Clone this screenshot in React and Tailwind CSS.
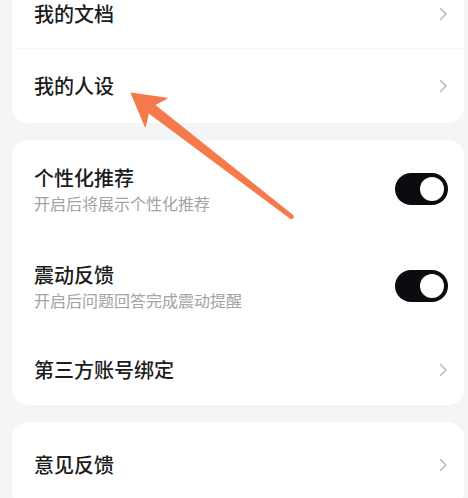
import React from "react";

const FONT = { fontFamily: '"Noto Sans CJK SC", "Noto Sans", sans-serif' };

function Chevron() {
  return (
    <svg width="9" height="14" viewBox="0 0 9 14" fill="none">
      <path d="M1.5 1.5 L7 7 L1.5 12.5" stroke="#b9b9b9" strokeWidth="1.5" strokeLinecap="round" strokeLinejoin="round" />
    </svg>
  );
}

function Toggle() {
  return (
    <div className="w-[53px] h-[32px] rounded-full bg-[#0b0b10] flex items-center justify-end pr-[4px]">
      <div className="w-[24px] h-[24px] rounded-full bg-white" />
    </div>
  );
}

function LinkRow({ title, h, border }) {
  return (
    <div className={`flex items-center justify-between pl-[22px] pr-[16px] ${h} ${border ? "border-b border-[#f7f7f7]" : ""}`}>
      <span className="text-[20px] font-medium text-[#1c1c1c] leading-none">{title}</span>
      <Chevron />
    </div>
  );
}

function ToggleRow({ title, sub }) {
  return (
    <div className="flex items-center justify-between pl-[22px] pr-[16px] h-[97px]">
      <div className="flex flex-col gap-[2px]">
        <span className="text-[20px] font-medium text-[#1c1c1c] leading-[26px]">{title}</span>
        <span className="text-[16px] text-[#a3a3a3] leading-[20px]">{sub}</span>
      </div>
      <Toggle />
    </div>
  );
}

export default function App() {
  return (
    <div className="relative w-[468px] h-[498px] overflow-hidden bg-[#f4f5f7]" style={FONT}>
      <div className="flex flex-col gap-[17px] pl-[12px] pr-[4px] -mt-[20px]">
        <div className="bg-white rounded-[16px]">
          <LinkRow title="我的文档" h="h-[69px]" border />
          <LinkRow title="我的人设" h="h-[74px]" />
        </div>
        <div className="bg-white rounded-[16px]">
          <ToggleRow title="个性化推荐" sub="开启后将展示个性化推荐" />
          <ToggleRow title="震动反馈" sub="开启后问题回答完成震动提醒" />
          <LinkRow title="第三方账号绑定" h="h-[71px]" />
        </div>
        <div className="bg-white rounded-[16px]">
          <LinkRow title="意见反馈" h="h-[86px]" />
        </div>
      </div>
      <svg className="absolute left-0 top-0 pointer-events-none" width="468" height="498" viewBox="0 0 468 498">
        <polygon
          points="131,93 167.3,98.3 154.7,104.9 293,215.4 290.6,218.6 148.5,112.8 145.3,126.9"
          fill="#f5794a"
          strokeLinejoin="round"
          stroke="#f5794a"
          strokeWidth="1"
        />
        <circle cx="291.8" cy="217" r="2" fill="#f5794a" />
      </svg>
    </div>
  );
}
